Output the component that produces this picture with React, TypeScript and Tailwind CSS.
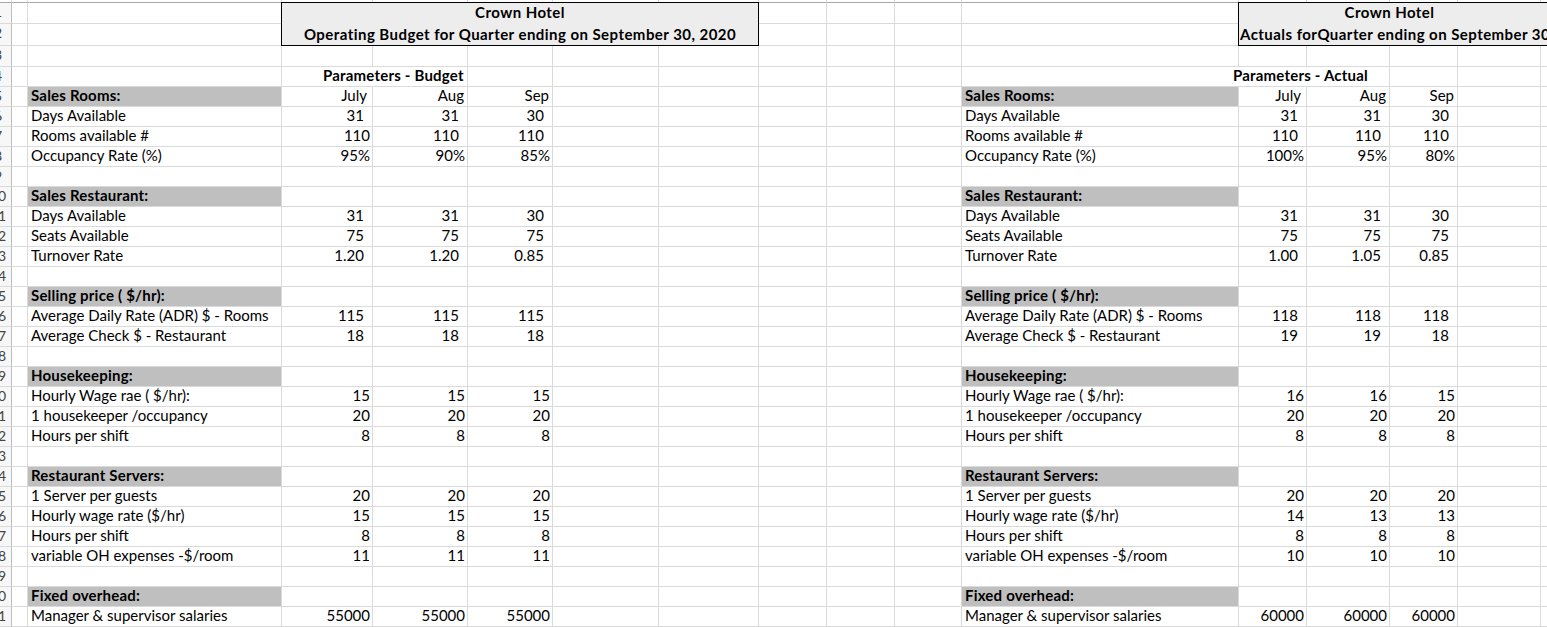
import clsx from "clsx";

type Kind = "tight" | "loose";

interface Row {
  label?: string;
  head?: boolean;
  budget?: string[];
  actual?: string[];
  kind?: Kind;
  // per-value override for budget padding (rooms available July)
  budgetKinds?: Kind[];
}

const rows: Row[] = [
  { label: "Sales Rooms:", head: true, budget: ["July", "Aug", "Sep"], actual: ["July", "Aug", "Sep"] },
  { label: "Days Available", budget: ["31", "31", "30"], actual: ["31", "31", "30"], kind: "loose" },
  {
    label: "Rooms available #",
    budget: ["110", "110", "110"],
    actual: ["110", "110", "110"],
    kind: "loose",
    budgetKinds: ["tight", "loose", "loose"],
  },
  { label: "Occupancy Rate (%)", budget: ["95%", "90%", "85%"], actual: ["100%", "95%", "80%"], kind: "tight" },
  {},
  { label: "Sales Restaurant:", head: true },
  { label: "Days Available", budget: ["31", "31", "30"], actual: ["31", "31", "30"], kind: "loose" },
  { label: "Seats Available", budget: ["75", "75", "75"], actual: ["75", "75", "75"], kind: "loose" },
  { label: "Turnover Rate", budget: ["1.20", "1.20", "0.85"], actual: ["1.00", "1.05", "0.85"], kind: "loose" },
  {},
  { label: "Selling price ( $/hr):", head: true },
  { label: "Average Daily Rate (ADR) $ - Rooms", budget: ["115", "115", "115"], actual: ["118", "118", "118"], kind: "loose" },
  { label: "Average Check $ - Restaurant", budget: ["18", "18", "18"], actual: ["19", "19", "18"], kind: "loose" },
  {},
  { label: "Housekeeping:", head: true },
  { label: "Hourly Wage rae ( $/hr):", budget: ["15", "15", "15"], actual: ["16", "16", "15"], kind: "tight" },
  { label: "1 housekeeper /occupancy", budget: ["20", "20", "20"], actual: ["20", "20", "20"], kind: "tight" },
  { label: "Hours per shift", budget: ["8", "8", "8"], actual: ["8", "8", "8"], kind: "tight" },
  {},
  { label: "Restaurant Servers:", head: true },
  { label: "1 Server per guests", budget: ["20", "20", "20"], actual: ["20", "20", "20"], kind: "tight" },
  { label: "Hourly wage rate ($/hr)", budget: ["15", "15", "15"], actual: ["14", "13", "13"], kind: "tight" },
  { label: "Hours per shift", budget: ["8", "8", "8"], actual: ["8", "8", "8"], kind: "tight" },
  { label: "variable OH expenses -$/room", budget: ["11", "11", "11"], actual: ["10", "10", "10"], kind: "tight" },
  {},
  { label: "Fixed overhead:", head: true },
  { label: "Manager & supervisor salaries", budget: ["55000", "55000", "55000"], actual: ["60000", "60000", "60000"], kind: "tight" },
];

const line = "border-r border-b border-[#dadada]";

function Cell({ className, children }: { className?: string; children?: React.ReactNode }) {
  return <div className={clsx(line, "min-w-0 whitespace-nowrap leading-[17px]", className)}>{children}</div>;
}

function RowNum({ n }: { n: number }) {
  return (
    <div className="overflow-hidden border-r border-b border-r-[#bdbdbd] border-b-[#dadada] bg-[#f7f7f7]">
      <div className="-ml-[15px] w-[26px] text-center text-[14px] leading-[17px] text-[#444]">{n}</div>
    </div>
  );
}

function Value({ v, kind, header }: { v?: string; kind?: Kind; header?: boolean }) {
  let pad = kind === "loose" ? "pr-[8px]" : "pr-[2px]";
  if (header) pad = v === "July" ? "pr-[5px]" : "pr-[3px]";
  return <Cell className={clsx("text-right", pad)}>{v}</Cell>;
}

function Label({ row }: { row: Row }) {
  return (
    <Cell className={clsx("pl-[3px]", row.head && "border-[#bfbfbf] bg-[#bfbfbf] font-bold tracking-[0.2px]")}>
      {row.label}
    </Cell>
  );
}

export default function App() {
  return (
    <div
      className="h-[627px] w-[1547px] overflow-hidden bg-white text-[15px] text-black"
      style={{ fontFamily: "Lato, 'Liberation Sans', sans-serif" }}
    >
      <div className="grid grid-cols-[12px_16px_254px_91px_95px_85px_106px_100px_68px_68px_67px_277px_68px_83px_68px_83px_100px] grid-rows-[3px_21px_22px_21px_repeat(28,20px)]">
        {/* column header remnant */}
        {Array.from({ length: 17 }).map((_, i) => (
          <div key={`h${i}`} className="border-r border-b border-r-[#dadada] border-b-[#a8a8a8]" />
        ))}

        {/* rows 1-2: title boxes */}
        <RowNum n={1} />
        <Cell />
        <Cell />
        <div className="relative z-10 col-span-5 row-span-2 -mt-px -ml-px border border-black bg-[#ededed] pt-px text-center font-bold leading-[17px] tracking-[0.45px]">
          <div>Crown Hotel</div>
          <div className="mt-[5px] whitespace-nowrap">Operating Budget for Quarter ending on September 30, 2020</div>
        </div>
        <Cell />
        <Cell />
        <Cell />
        <Cell />
        <div className="relative z-10 col-span-5 row-span-2 -mt-px -ml-px overflow-hidden border-t border-b border-l border-black bg-[#ededed] pt-px font-bold leading-[17px] tracking-[0.45px]">
          <div className="w-[301px] text-center">Crown Hotel</div>
          <div className="mt-[5px] whitespace-nowrap pl-px">Actuals forQuarter ending on September 30, 2020</div>
        </div>

        <RowNum n={2} />
        <Cell />
        <Cell />
        <Cell />
        <Cell />
        <Cell />
        <Cell />

        {/* row 3 */}
        <RowNum n={3} />
        {Array.from({ length: 16 }).map((_, i) => (
          <Cell key={`r3${i}`} />
        ))}

        {/* row 4: parameter captions */}
        <RowNum n={4} />
        <Cell />
        <Cell />
        <Cell className="col-span-2 pl-[41px] font-bold tracking-[0.2px]">Parameters - Budget</Cell>
        <Cell />
        <Cell />
        <Cell />
        <Cell />
        <Cell />
        <Cell />
        <Cell className="col-span-3 pl-[271px] font-bold tracking-[0.2px]">Parameters - Actual</Cell>
        <Cell />
        <Cell />
        <Cell />

        {rows.map((row, i) => (
          <Line key={i} n={i + 5} row={row} />
        ))}
      </div>
    </div>
  );
}

function Line({ n, row }: { n: number; row: Row }) {
  const b = row.budget ?? ["", "", ""];
  const a = row.actual ?? ["", "", ""];
  return (
    <>
      <RowNum n={n} />
      <Cell />
      <Label row={row} />
      {b.map((v, j) => (
        <Value key={`b${j}`} v={v} kind={row.budgetKinds?.[j] ?? row.kind} header={row.head} />
      ))}
      <Cell />
      <Cell />
      <Cell />
      <Cell />
      <Cell />
      <Label row={row} />
      {a.map((v, j) => (
        <Value key={`a${j}`} v={v} kind={row.kind} header={row.head} />
      ))}
      <Cell />
      <Cell />
    </>
  );
}
